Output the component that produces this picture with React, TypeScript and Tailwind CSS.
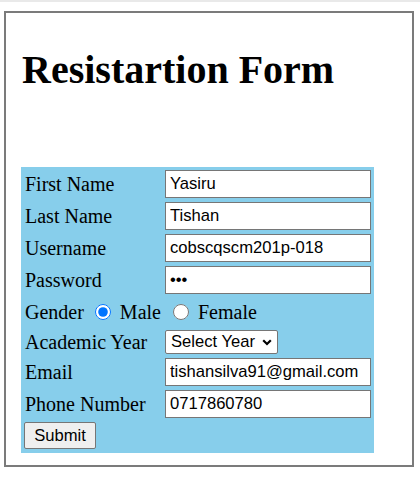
import React from 'react';

const fields = [
  { label: 'First Name', value: 'Yasiru', type: 'text' },
  { label: 'Last Name', value: 'Tishan', type: 'text' },
  { label: 'Username', value: 'cobscqscm201p-018', type: 'text' },
  { label: 'Password', value: 'abc', type: 'password' },
];

const inputCls =
  "h-[28px] w-[206px] border border-[#767676] bg-white px-[4px] text-[16.6px] text-black font-['Liberation_Sans',Arial,sans-serif] outline-none";

const Label: React.FC<{ children: React.ReactNode }> = ({ children }) => (
  <div className="flex h-[28px] w-[140px] items-center pl-[3px]">{children}</div>
);

const App: React.FC = () => {
  return (
    <div className="h-[481px] w-[420px] overflow-hidden bg-white font-['Liberation_Serif','Times_New_Roman',serif] text-black">
      <div className="h-[2px] bg-[#e9e9e9]" />

      <div className="ml-[4px] mt-[9px] h-[456px] w-[410px] border-2 border-[#7b7b7b] px-[15px] pt-[34px]">
        <h1 className="pl-[1px] text-[40px] leading-[46px] font-bold">Resistartion Form</h1>

        {/* Form table */}
        <form className="mt-[74px] flex w-[353px] flex-col gap-[4px] bg-[#87ceeb] px-[1px] pb-[4px] pt-[3px] text-[20px] leading-[23px]">
          {fields.map((f) => (
            <div key={f.label} className="flex items-center gap-[3px]">
              <Label>{f.label}</Label>
              <input type={f.type} defaultValue={f.value} className={inputCls} />
            </div>
          ))}

          <div className="flex h-[28px] items-center pl-[3px]">
            <span>Gender</span>
            <input
              type="radio"
              name="gender"
              defaultChecked
              className="m-0 ml-[11px] mr-[9px] h-[16px] w-[16px] accent-[#0075ff]"
            />
            <span>Male</span>
            <input type="radio" name="gender" className="m-0 ml-[12px] mr-[9px] h-[16px] w-[16px]" />
            <span>Female</span>
          </div>

          <div className="flex h-[24px] items-center gap-[3px]">
            <div className="flex h-[24px] w-[140px] items-center pl-[3px]">Academic Year</div>
            <div className="relative flex">
              <select
                defaultValue=""
                className="h-[24px] w-[113px] appearance-none rounded-[2px] border border-[#767676] bg-white pl-[5px] text-[16.6px] leading-[20px] text-black font-['Liberation_Sans',Arial,sans-serif] outline-none"
              >
                <option value="">Select Year</option>
                <option value="1">Year 1</option>
                <option value="2">Year 2</option>
              </select>
              <svg
                className="pointer-events-none absolute right-[6px] top-[9px]"
                width="10"
                height="7"
                viewBox="0 0 10 7"
              >
                <path d="M1.2 1.2L5 5l3.8-3.8" fill="none" stroke="#000" strokeWidth="2.2" />
              </svg>
            </div>
          </div>

          <div className="flex items-center gap-[3px]">
            <Label>Email</Label>
            <input type="email" defaultValue="tishansilva91@gmail.com" className={inputCls} />
          </div>

          <div className="flex items-center gap-[3px]">
            <Label>Phone Number</Label>
            <input type="text" defaultValue="0717860780" className={inputCls} />
          </div>

          <div className="flex pl-[2px]">
            <button
              type="button"
              className="h-[27px] w-[72px] rounded-[2px] border border-[#767676] bg-[#efefef] text-[16.6px] leading-[20px] text-black font-['Liberation_Sans',Arial,sans-serif]"
            >
              Submit
            </button>
          </div>
        </form>
      </div>
    </div>
  );
};

export default App;
